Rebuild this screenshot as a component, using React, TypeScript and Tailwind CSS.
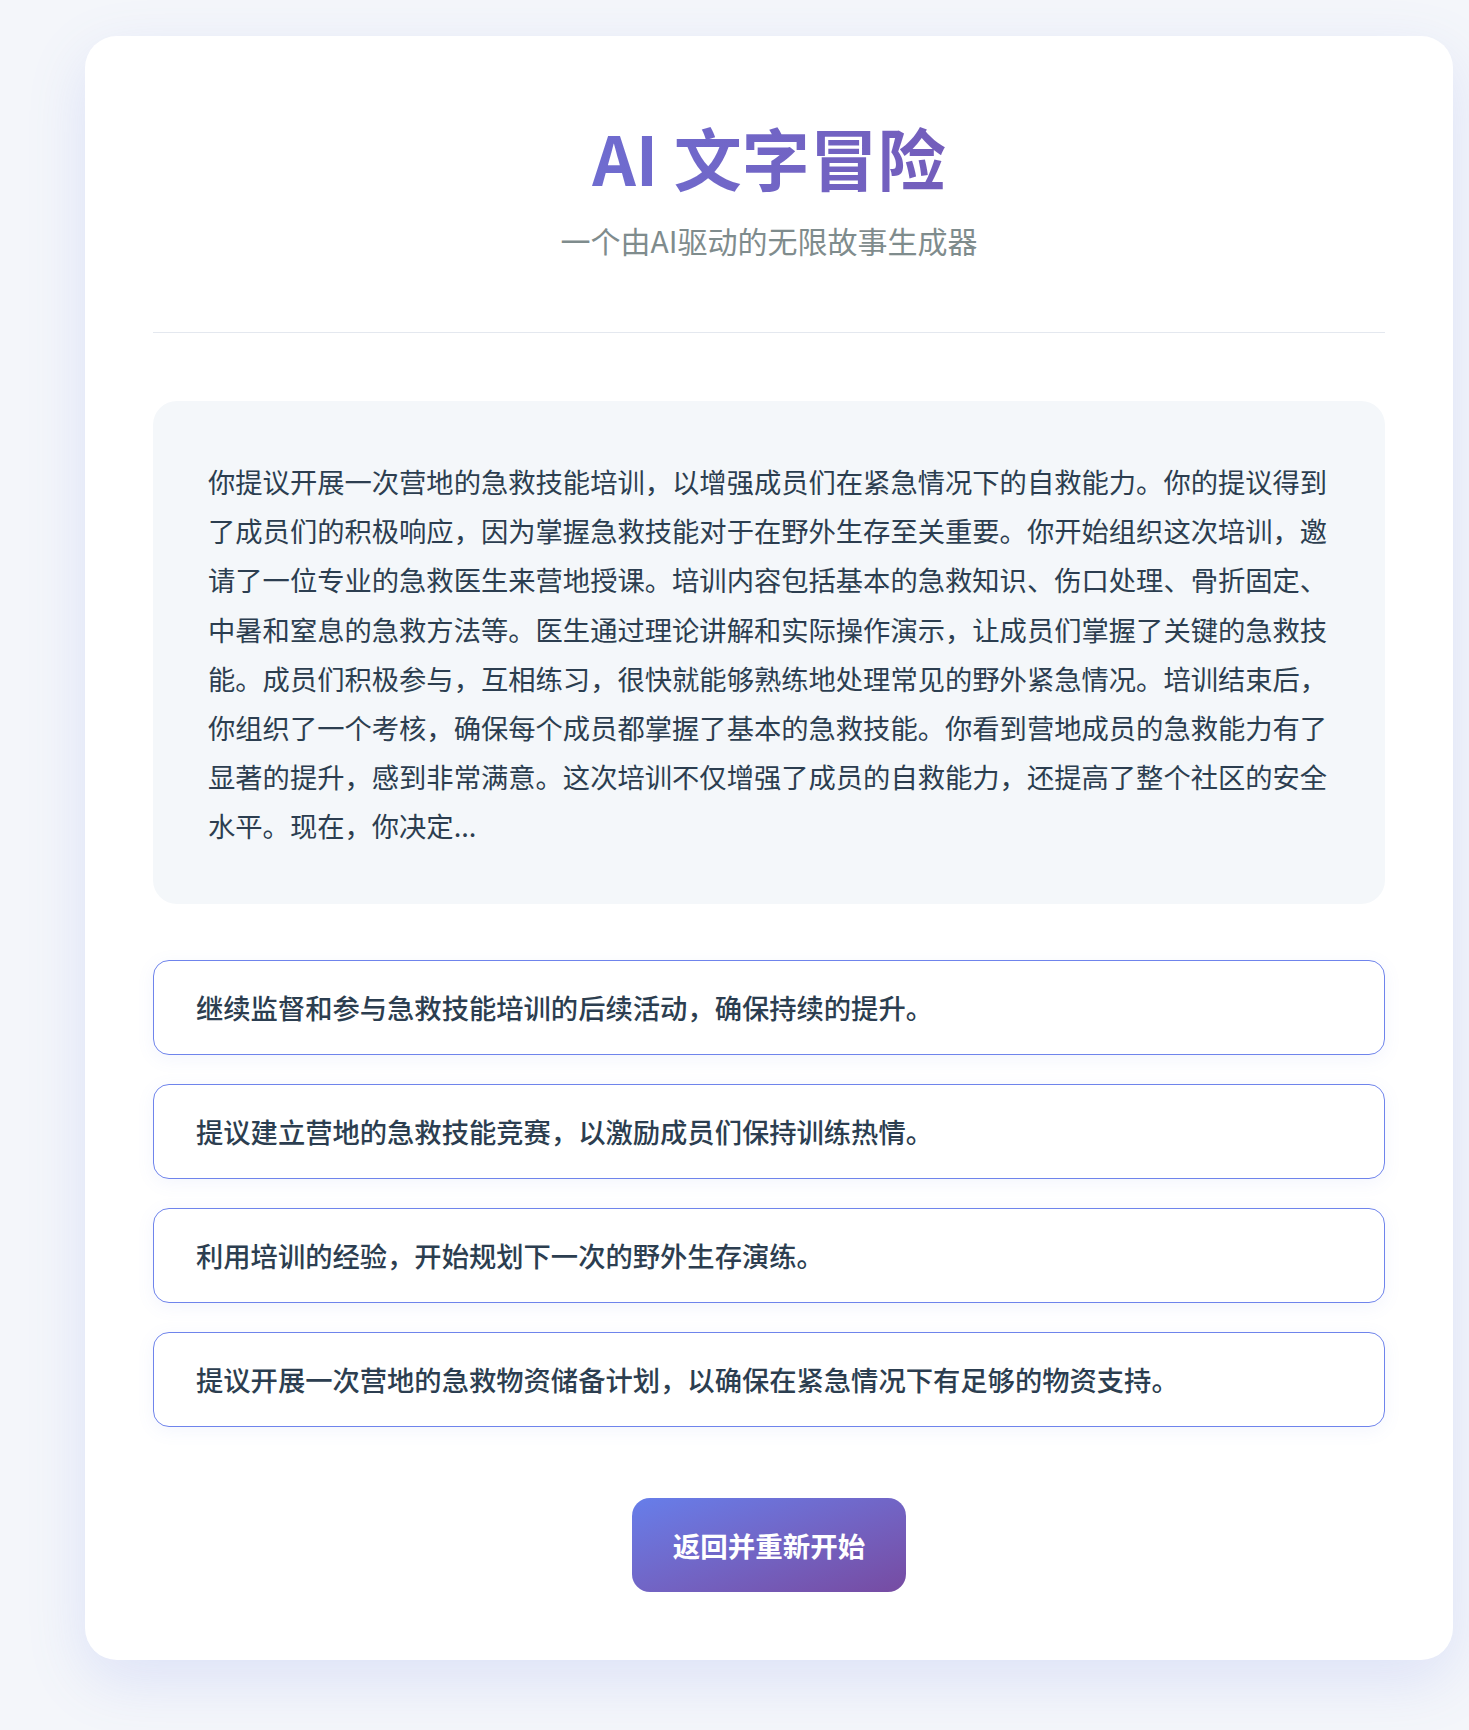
export default function App() {
  const story =
    "你提议开展一次营地的急救技能培训，以增强成员们在紧急情况下的自救能力。你的提议得到了成员们的积极响应，因为掌握急救技能对于在野外生存至关重要。你开始组织这次培训，邀请了一位专业的急救医生来营地授课。培训内容包括基本的急救知识、伤口处理、骨折固定、中暑和窒息的急救方法等。医生通过理论讲解和实际操作演示，让成员们掌握了关键的急救技能。成员们积极参与，互相练习，很快就能够熟练地处理常见的野外紧急情况。培训结束后，你组织了一个考核，确保每个成员都掌握了基本的急救技能。你看到营地成员的急救能力有了显著的提升，感到非常满意。这次培训不仅增强了成员的自救能力，还提高了整个社区的安全水平。现在，你决定...";
  const options = [
    "继续监督和参与急救技能培训的后续活动，确保持续的提升。",
    "提议建立营地的急救技能竞赛，以激励成员们保持训练热情。",
    "利用培训的经验，开始规划下一次的野外生存演练。",
    "提议开展一次营地的急救物资储备计划，以确保在紧急情况下有足够的物资支持。",
  ];
  return (
    <div
      className="min-h-[1730px] w-full bg-[#f4f6fa] pt-[36px] pb-[70px]"
      style={{ fontFamily: '"Noto Sans CJK SC", "Noto Sans", sans-serif' }}
    >
      <div className="ml-[85px] w-[1368px] rounded-[32px] bg-white px-[68px] pt-[80px] pb-[68px] shadow-[0_20px_60px_rgba(102,126,234,0.16)]">
        <div className="border-b border-[#e4e8ef] pb-[70px] text-center">
          <h1 className="bg-gradient-to-r from-[#667eea] to-[#764ba2] bg-clip-text text-[68px] font-bold leading-[82px] text-transparent">
            AI 文字冒险
          </h1>
          <p className="mt-[20px] text-[30px] leading-[44px] text-[#7f8c8d]">
            一个由AI驱动的无限故事生成器
          </p>
        </div>

        <div className="mt-[68px] rounded-[24px] bg-[#f4f7fa] pl-[55px] pr-[50px] pt-[56px] pb-[53px]">
          <p className="text-[27.3px] leading-[49.2px] text-[#2c3e50]">{story}</p>
        </div>

        <div className="mt-[56px] flex flex-col gap-[29px]">
          {options.map((o) => (
            <button
              key={o}
              className="w-full rounded-[16px] border border-[#6f84ec] bg-white px-[42px] py-[26px] text-left text-[27.3px] font-medium leading-[41px] text-[#2c3e50] shadow-[0_4px_18px_rgba(102,126,234,0.08)]"
            >
              {o}
            </button>
          ))}
        </div>

        <div className="mt-[71px] flex justify-center">
          <button className="rounded-[18px] bg-gradient-to-br from-[#667eea] to-[#764ba2] px-[41px] py-[26px] text-[27.5px] font-semibold leading-[42px] text-white">
            返回并重新开始
          </button>
        </div>
      </div>
    </div>
  );
}
